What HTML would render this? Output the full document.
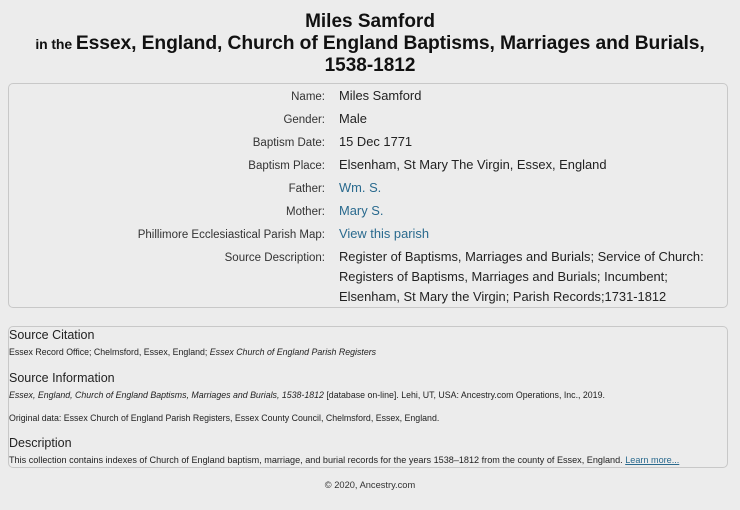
<!DOCTYPE html>
<html><head><meta charset="utf-8"><style>
body{margin:0;width:740px;height:510px;background:#ececec;font-family:"Liberation Sans",sans-serif;color:#222;position:relative;overflow:hidden}
.t{position:absolute;left:0;width:740px;text-align:center;font-weight:bold;color:#111;white-space:nowrap}
.box{position:absolute;left:8px;width:718px;border:1px solid #c8c8c8;border-radius:5px}
.l{position:absolute;right:415px;font-size:11.5px;color:#333;white-space:nowrap;text-align:right}
.v{position:absolute;left:339px;font-size:12.9px;color:#222;white-space:nowrap}
a{color:#2a6a8e;text-decoration:none}
.h{position:absolute;left:9px;font-size:12.5px;color:#222;white-space:nowrap}
.s{position:absolute;left:9px;font-size:8.8px;color:#222;white-space:nowrap}
</style></head><body>
<div class="t" style="top:11px;font-size:19px">Miles Samford</div>
<div class="t" style="top:33px;font-size:19.3px;letter-spacing:-0.1px"><span style="font-size:14px">in the </span>Essex, England, Church of England Baptisms, Marriages and Burials,</div>
<div class="t" style="top:55px;font-size:19px">1538-1812</div>
<div class="box" style="top:83px;height:223px"></div>
<div class="l" style="top:91px">Name:</div><div class="v" style="top:88px">Miles Samford</div>
<div class="l" style="top:114px">Gender:</div><div class="v" style="top:111px">Male</div>
<div class="l" style="top:137px">Baptism Date:</div><div class="v" style="top:134px">15 Dec 1771</div>
<div class="l" style="top:160px">Baptism Place:</div><div class="v" style="top:157px">Elsenham, St Mary The Virgin, Essex, England</div>
<div class="l" style="top:183px">Father:</div><div class="v" style="top:180px"><a>Wm. S.</a></div>
<div class="l" style="top:206px">Mother:</div><div class="v" style="top:203px"><a>Mary S.</a></div>
<div class="l" style="top:229px">Phillimore Ecclesiastical Parish Map:</div><div class="v" style="top:226px"><a>View this parish</a></div>
<div class="l" style="top:252px">Source Description:</div>
<div class="v" style="top:247px;line-height:20px">Register of Baptisms, Marriages and Burials; Service of Church:<br>Registers of Baptisms, Marriages and Burials; Incumbent;<br>Elsenham, St Mary the Virgin; Parish Records;1731-1812</div>
<div class="box" style="top:326px;height:140px"></div>
<div class="h" style="top:328px">Source Citation</div>
<div class="s" style="top:347px">Essex Record Office; Chelmsford, Essex, England; <i>Essex Church of England Parish Registers</i></div>
<div class="h" style="top:371px">Source Information</div>
<div class="s" style="top:390px"><i>Essex, England, Church of England Baptisms, Marriages and Burials, 1538-1812</i> [database on-line]. Lehi, UT, USA: Ancestry.com Operations, Inc., 2019.</div>
<div class="s" style="top:413px">Original data: Essex Church of England Parish Registers, Essex County Council, Chelmsford, Essex, England.</div>
<div class="h" style="top:436px">Description</div>
<div class="s" style="top:455px;font-size:9.1px">This collection contains indexes of Church of England baptism, marriage, and burial records for the years 1538–1812 from the county of Essex, England. <a style="text-decoration:underline">Learn more...</a></div>
<div style="position:absolute;top:480px;left:0;width:740px;text-align:center;font-size:9.3px;color:#333">© 2020, Ancestry.com</div>
</body></html>
